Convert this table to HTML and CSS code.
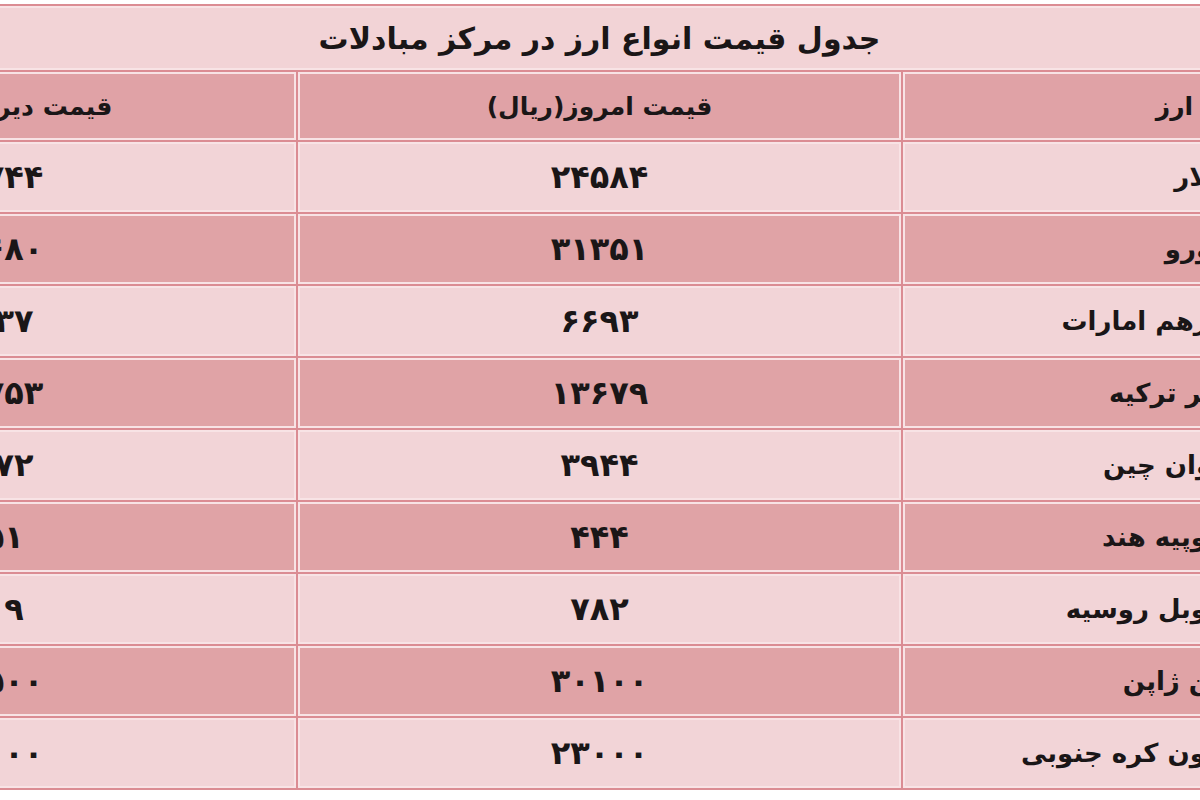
FILE: index.html
```html
<!DOCTYPE html>
<html lang="fa" dir="rtl">
<head>
<meta charset="utf-8">
<title>جدول قیمت انواع ارز در مرکز مبادلات</title>
<link rel="stylesheet" href="styles.css">
</head>
<body>
<div class="stage">
<table class="rates">
  <colgroup>
    <col class="c-name">
    <col class="c-today">
    <col class="c-yest">
  </colgroup>
  <thead>
    <tr class="title-row"><th colspan="3">جدول قیمت انواع ارز در مرکز مبادلات</th></tr>
    <tr class="head-row">
      <th class="name">نوع ارز</th>
      <th>قیمت امروز(ریال)</th>
      <th class="yest">قیمت دیروز(ریال)</th>
    </tr>
  </thead>
  <tbody>
    <tr class="light"><td class="name">دلار</td><td>۲۴۵۸۴</td><td>۲۴۷۴۴</td></tr>
    <tr class="dark"><td class="name">یورو</td><td>۳۱۳۵۱</td><td>۳۱۶۸۰</td></tr>
    <tr class="light"><td class="name">درهم امارات</td><td>۶۶۹۳</td><td>۶۷۳۷</td></tr>
    <tr class="dark"><td class="name">لیر ترکیه</td><td>۱۳۶۷۹</td><td>۱۳۷۵۳</td></tr>
    <tr class="light"><td class="name">یوان چین</td><td>۳۹۴۴</td><td>۳۹۷۲</td></tr>
    <tr class="dark"><td class="name">روپیه هند</td><td>۴۴۴</td><td>۴۵۱</td></tr>
    <tr class="light"><td class="name">روبل روسیه</td><td>۷۸۲</td><td>۸۱۹</td></tr>
    <tr class="dark"><td class="name">ین ژاپن</td><td>۳۰۱۰۰</td><td>۳۰۵۰۰</td></tr>
    <tr class="light"><td class="name">وون کره جنوبی</td><td>۲۳۰۰۰</td><td>۲۳۰۰۰</td></tr>
  </tbody>
</table>
</div>
</body>
</html>
```
FILE: styles.css
```css
html, body {
  margin: 0;
  padding: 0;
  background: #ffffff;
  overflow: hidden;
}
.stage {
  width: 1200px;
  height: 800px;
  overflow: hidden;
}
.rates {
  direction: rtl;
  margin-top: 4px;
  margin-right: -308px;
  width: 1815px;
  table-layout: fixed;
  border-collapse: collapse;
  font-family: "DejaVu Sans", sans-serif;
  font-weight: bold;
  color: #1a1617;
}
.c-name, .c-today, .c-yest { width: 605px; }
.rates th, .rates td {
  border: 2px solid #db8c93;
  box-shadow: inset 0 0 0 2px #f8e3e5;
  padding: 0;
  text-align: center;
  vertical-align: middle;
  font-size: 32px;
  white-space: nowrap;
  overflow: hidden;
}
.title-row th {
  height: 64px;
  background: #f2d3d6;
  font-size: 30px;
}
.head-row th {
  height: 68px;
  background: #e0a2a6;
  font-size: 25px;
}
.head-row .yest { padding-left: 12px; }
.rates td { height: 70px; }
.light td { background: #f2d4d7; }
.dark td { background: #e0a3a6; }
.rates td.name {
  text-align: right;
  padding-right: 284px;
  font-size: 26px;
}
.head-row .name {
  text-align: right;
  padding-right: 262px;
}
```
